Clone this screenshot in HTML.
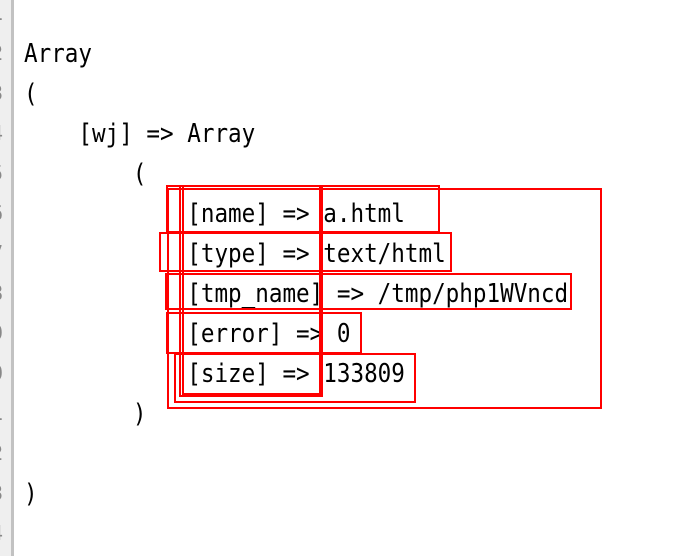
<!DOCTYPE html>
<html><head><meta charset="utf-8"><style>
body{margin:0;width:682px;height:556px;background:#fff;overflow:hidden;position:relative;font-family:"DejaVu Sans Mono","Liberation Mono",monospace;}
.g{position:absolute;left:0;top:0;width:11px;height:556px;background:#efefef;border-right:3px solid #c2c2c2;overflow:hidden}
.g div{position:absolute;left:-9px;font-size:20px;color:#888;line-height:40px;height:40px}
pre{position:absolute;left:24px;top:34px;margin:0;font-size:26px;line-height:40px;color:#000;font-family:inherit;transform:scaleX(0.869);transform-origin:0 0}
.b{position:absolute;border:2px solid #f00;box-sizing:border-box}
</style></head><body>
<div class="g">
<div style="top:-7px">1</div><div style="top:33px">2</div><div style="top:73px">3</div><div style="top:113px">4</div><div style="top:153px">5</div><div style="top:193px">6</div><div style="top:233px">7</div><div style="top:273px">8</div><div style="top:313px">9</div><div style="top:353px">0</div><div style="top:393px">1</div><div style="top:433px">2</div><div style="top:473px">3</div><div style="top:513px">4</div>
</div>
<pre>Array
(
    [wj] =&gt; Array
        (
            [name] =&gt; a.html
            [type] =&gt; text/html
            [tmp_name] =&gt; /tmp/php1WVncd
            [error] =&gt; 0
            [size] =&gt; 133809
        )

)
</pre>
<div class="b" style="left:167px;top:188px;width:435px;height:221px"></div>
<div class="b" style="left:182px;top:185px;width:258px;height:48px"></div>
<div class="b" style="left:166px;top:185px;width:155px;height:48px"></div>
<div class="b" style="left:179px;top:185px;width:144px;height:212px"></div>
<div class="b" style="left:182px;top:185px;width:139px;height:210px"></div>
<div class="b" style="left:159px;top:232px;width:293px;height:40px"></div>
<div class="b" style="left:165px;top:273px;width:407px;height:37px"></div>
<div class="b" style="left:166px;top:312px;width:196px;height:42px"></div>
<div class="b" style="left:174px;top:353px;width:242px;height:50px"></div>
</body></html>
